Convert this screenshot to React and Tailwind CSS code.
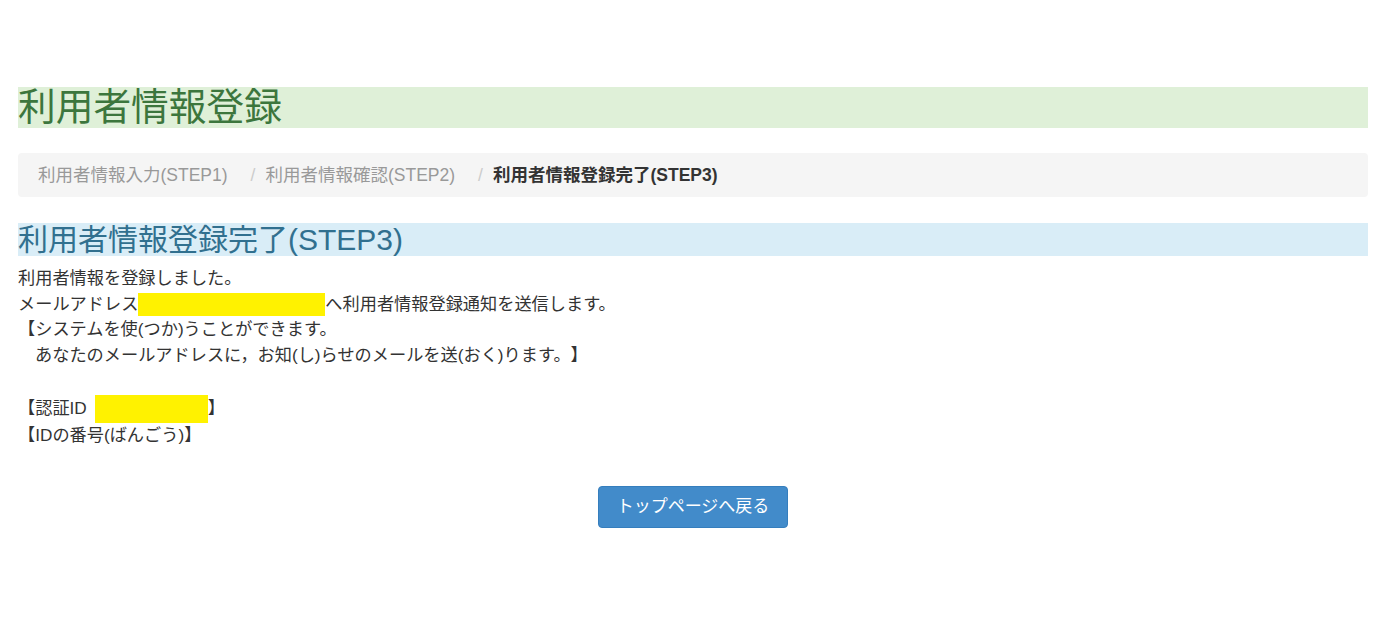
import React from 'react';

const font = { fontFamily: '"Liberation Sans", "Noto Sans CJK JP", sans-serif' };

export default function App() {
  return (
    <div className="min-h-[629px] bg-white pl-[18px] pr-[16px] pt-[87px] text-[#333] [text-spacing-trim:space-all]" style={font}>
      <h1 className="h-[41px] bg-[#dff0d8] text-[37.7px] leading-[41px] text-[#3c763d] font-normal">利用者情報登録</h1>

      <ol className="mt-[25px] flex h-[44px] items-center rounded bg-[#f5f5f5] px-[20px] text-[17.5px]">
        <li className="text-[#999]">利用者情報入力(STEP1)</li>
        <li className="ml-[23px] mr-[10px] text-[#ccc]">/</li>
        <li className="text-[#999]">利用者情報確認(STEP2)</li>
        <li className="ml-[23px] mr-[10px] text-[#ccc]">/</li>
        <li className="font-bold text-[#333]">利用者情報登録完了(STEP3)</li>
      </ol>

      <h2 className="mt-[26px] h-[33px] bg-[#d9edf7] text-[30px] leading-[33px] text-[#31708f] font-normal">利用者情報登録完了(STEP3)</h2>

      <div className="mt-[10px] text-[17.2px] leading-[25.7px]">
        <div>利用者情報を登録しました。</div>
        <div className="flex items-center">
          <span>メールアドレス</span>
          <span className="inline-block h-[23px] w-[187px] bg-[#fff200]"></span>
          <span>へ利用者情報登録通知を送信します。</span>
        </div>
        <div>【システムを使(つか)うことができます。</div>
        <div className="pl-[17px]">あなたのメールアドレスに，お知(し)らせのメールを送(おく)ります。】</div>
        <div className="h-[25.7px]"></div>
        <div className="flex items-center">
          <span>【認証ID</span>
          <span className="ml-[8px] inline-block h-[28px] w-[113px] bg-[#fff200]"></span>
          <span>】</span>
        </div>
        <div>【IDの番号(ばんごう)】</div>
      </div>

      <div className="mt-[38px] flex justify-center">
        <button className="h-[42px] w-[190px] rounded border border-[#357ebd] bg-[#428bca] text-[17px] text-white">トップページへ戻る</button>
      </div>
    </div>
  );
}
